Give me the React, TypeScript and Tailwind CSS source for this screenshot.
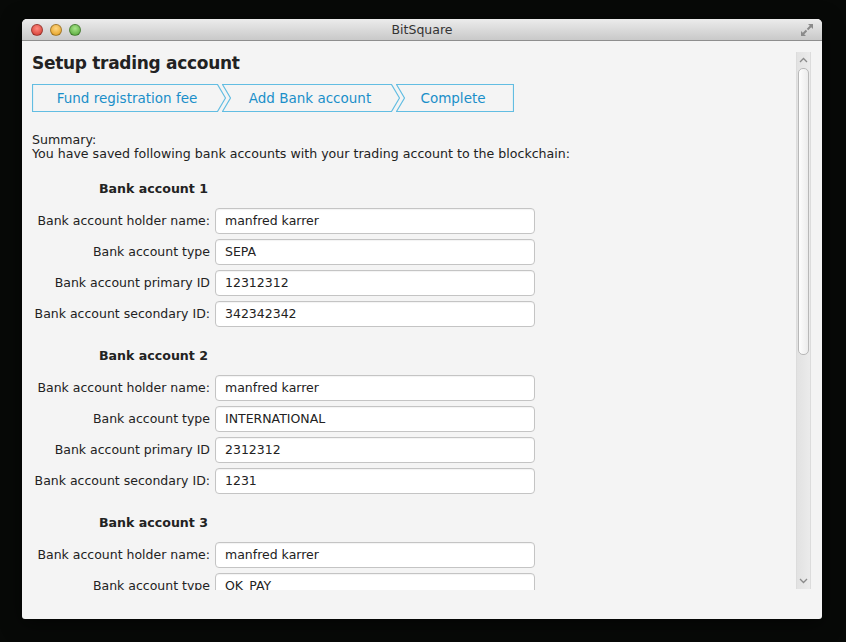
import React from "react";

const font = { fontFamily: '"DejaVu Sans", "Liberation Sans", sans-serif' };

type Account = { holder: string; type: string; primary: string; secondary: string };

const accounts: Account[] = [
  { holder: "manfred karrer", type: "SEPA", primary: "12312312", secondary: "342342342" },
  { holder: "manfred karrer", type: "INTERNATIONAL", primary: "2312312", secondary: "1231" },
  { holder: "manfred karrer", type: "OK_PAY", primary: "123123", secondary: "123123" },
];

function Step({ label, width, first, last }: { label: string; width: number; first?: boolean; last?: boolean }) {
  const h = 28;
  const d = 8;
  const w = width;
  const pts = [
    `0.5,0.5`,
    last ? `${w - 0.5},0.5` : `${w - d - 0.5},0.5`,
    ...(last ? [`${w - 0.5},${h - 0.5}`] : [`${w - 0.5},${h / 2}`, `${w - d - 0.5},${h - 0.5}`]),
    `0.5,${h - 0.5}`,
    ...(first ? [] : [`${d + 0.5},${h / 2}`]),
  ].join(" ");
  return (
    <div className="relative flex h-[28px] shrink-0 items-center justify-center" style={{ width }}>
      <svg className="absolute inset-0" width={w} height={h}>
        <polygon points={pts} fill="none" stroke="#62bde2" strokeWidth="1.2" />
      </svg>
      <span className={`relative whitespace-nowrap text-[13.5px] text-[#1a8fc9] ${first ? "pr-[4px]" : last ? "pr-[4px]" : "pr-[2px]"}`}>{label}</span>
    </div>
  );
}

function Row({ label, value }: { label: string; value: string }) {
  return (
    <div className="flex h-[26px] items-center gap-[5px]">
      <div className="flex w-[178px] justify-end whitespace-nowrap text-[12.5px] text-[#222]">{label}</div>
      <div className="flex h-[26px] w-[320px] items-center rounded-[4px] border border-[#c4c4c4] bg-white pl-[9px] text-[12.5px] text-[#222] shadow-[inset_0_1px_1px_rgba(0,0,0,0.05)]">
        {value}
      </div>
    </div>
  );
}

function Group({ n, a }: { n: number; a: Account }) {
  return (
    <div className="flex flex-col">
      <div className="h-[20px] pl-[67px] text-[12.6px] font-bold leading-[20px] text-[#222]">Bank account {n}</div>
      <div className="mt-[9px] flex flex-col gap-[5px]">
        <Row label="Bank account holder name:" value={a.holder} />
        <Row label="Bank account type" value={a.type} />
        <Row label="Bank account primary ID" value={a.primary} />
        <Row label="Bank account secondary ID:" value={a.secondary} />
      </div>
    </div>
  );
}

function Light({ c1, c2 }: { c1: string; c2: string }) {
  return (
    <div
      className="h-[12px] w-[12px] rounded-full border border-black/30"
      style={{ background: `radial-gradient(circle at 50% 35%, ${c1}, ${c2})` }}
    />
  );
}

export default function App() {
  return (
    <div className="h-[642px] w-[846px] overflow-hidden bg-[#070907] pt-[19px] pl-[22px]" style={font}>
      <div className="flex h-[600px] w-[800px] flex-col overflow-hidden rounded-t-[5px] rounded-b-[3px] bg-[#f4f4f4] shadow-[0_4px_20px_rgba(0,0,0,0.6)]">
        {/* title bar */}
        <div className="relative flex h-[22px] shrink-0 items-center justify-between border-b border-[#8e8e8e] bg-gradient-to-b from-[#ececec] to-[#c9c9c9] px-[9px]">
          <div className="flex gap-[7px]">
            <Light c1="#ff8a80" c2="#d0352c" />
            <Light c1="#ffd680" c2="#e09a1c" />
            <Light c1="#a8e58a" c2="#4ea233" />
          </div>
          <div className="pointer-events-none absolute inset-x-0 top-[3px] text-center text-[12.5px] leading-[16px] text-[#333]">BitSquare</div>
          <svg width="14" height="14" viewBox="0 0 14 14" className="mr-[-1px]">
            <path d="M8 1h5v5l-1.8-1.8-3 3-1.4-1.4 3-3z" fill="#8a8a8a" />
            <path d="M6 13H1V8l1.8 1.8 3-3 1.4 1.4-3 3z" fill="#8a8a8a" />
          </svg>
        </div>
        {/* content */}
        <div className="flex flex-1 pt-[8px]">
          <div className="h-[541px] w-[774px] overflow-hidden pl-[10px] pt-[2px]">
            <div className="text-[17px] font-bold leading-[24px] tracking-[-0.3px] text-[#222]">Setup trading account</div>
            <div className="mt-[9px] flex">
              <Step label="Fund registration fee" width={194} first />
              <div className="-ml-[4px]">
                <Step label="Add Bank account" width={178} />
              </div>
              <div className="-ml-[4px]">
                <Step label="Complete" width={118} last />
              </div>
            </div>
            <div className="mt-[21px] text-[12.6px] leading-[14px] text-[#222]">
              <div>Summary:</div>
              <div>You have saved following bank accounts with your trading account to the blockchain:</div>
            </div>
            <div className="mt-[18px] flex flex-col gap-[19px]">
              {accounts.map((a, i) => (
                <Group key={i} n={i + 1} a={a} />
              ))}
            </div>
          </div>
          {/* scrollbar */}
          <div className="mt-[3px] flex h-[537px] w-[15px] flex-col border-x border-[#dcdcdc] bg-gradient-to-r from-[#e2e2e2] to-[#ebebeb]">
            <div className="flex h-[16px] items-center justify-center">
              <svg width="9" height="6" viewBox="0 0 9 6">
                <path d="M1 5l3.5-3.5L8 5" fill="none" stroke="#8a8a8a" strokeWidth="1.3" />
              </svg>
            </div>
            <div className="mx-auto h-[287px] w-[11px] rounded-[5px] border border-[#b8b8b8] bg-gradient-to-r from-[#fdfdfd] to-[#ececec]" />
            <div className="flex-1" />
            <div className="flex h-[16px] items-center justify-center">
              <svg width="9" height="6" viewBox="0 0 9 6">
                <path d="M1 1l3.5 3.5L8 1" fill="none" stroke="#8a8a8a" strokeWidth="1.3" />
              </svg>
            </div>
          </div>
        </div>
      </div>
    </div>
  );
}
